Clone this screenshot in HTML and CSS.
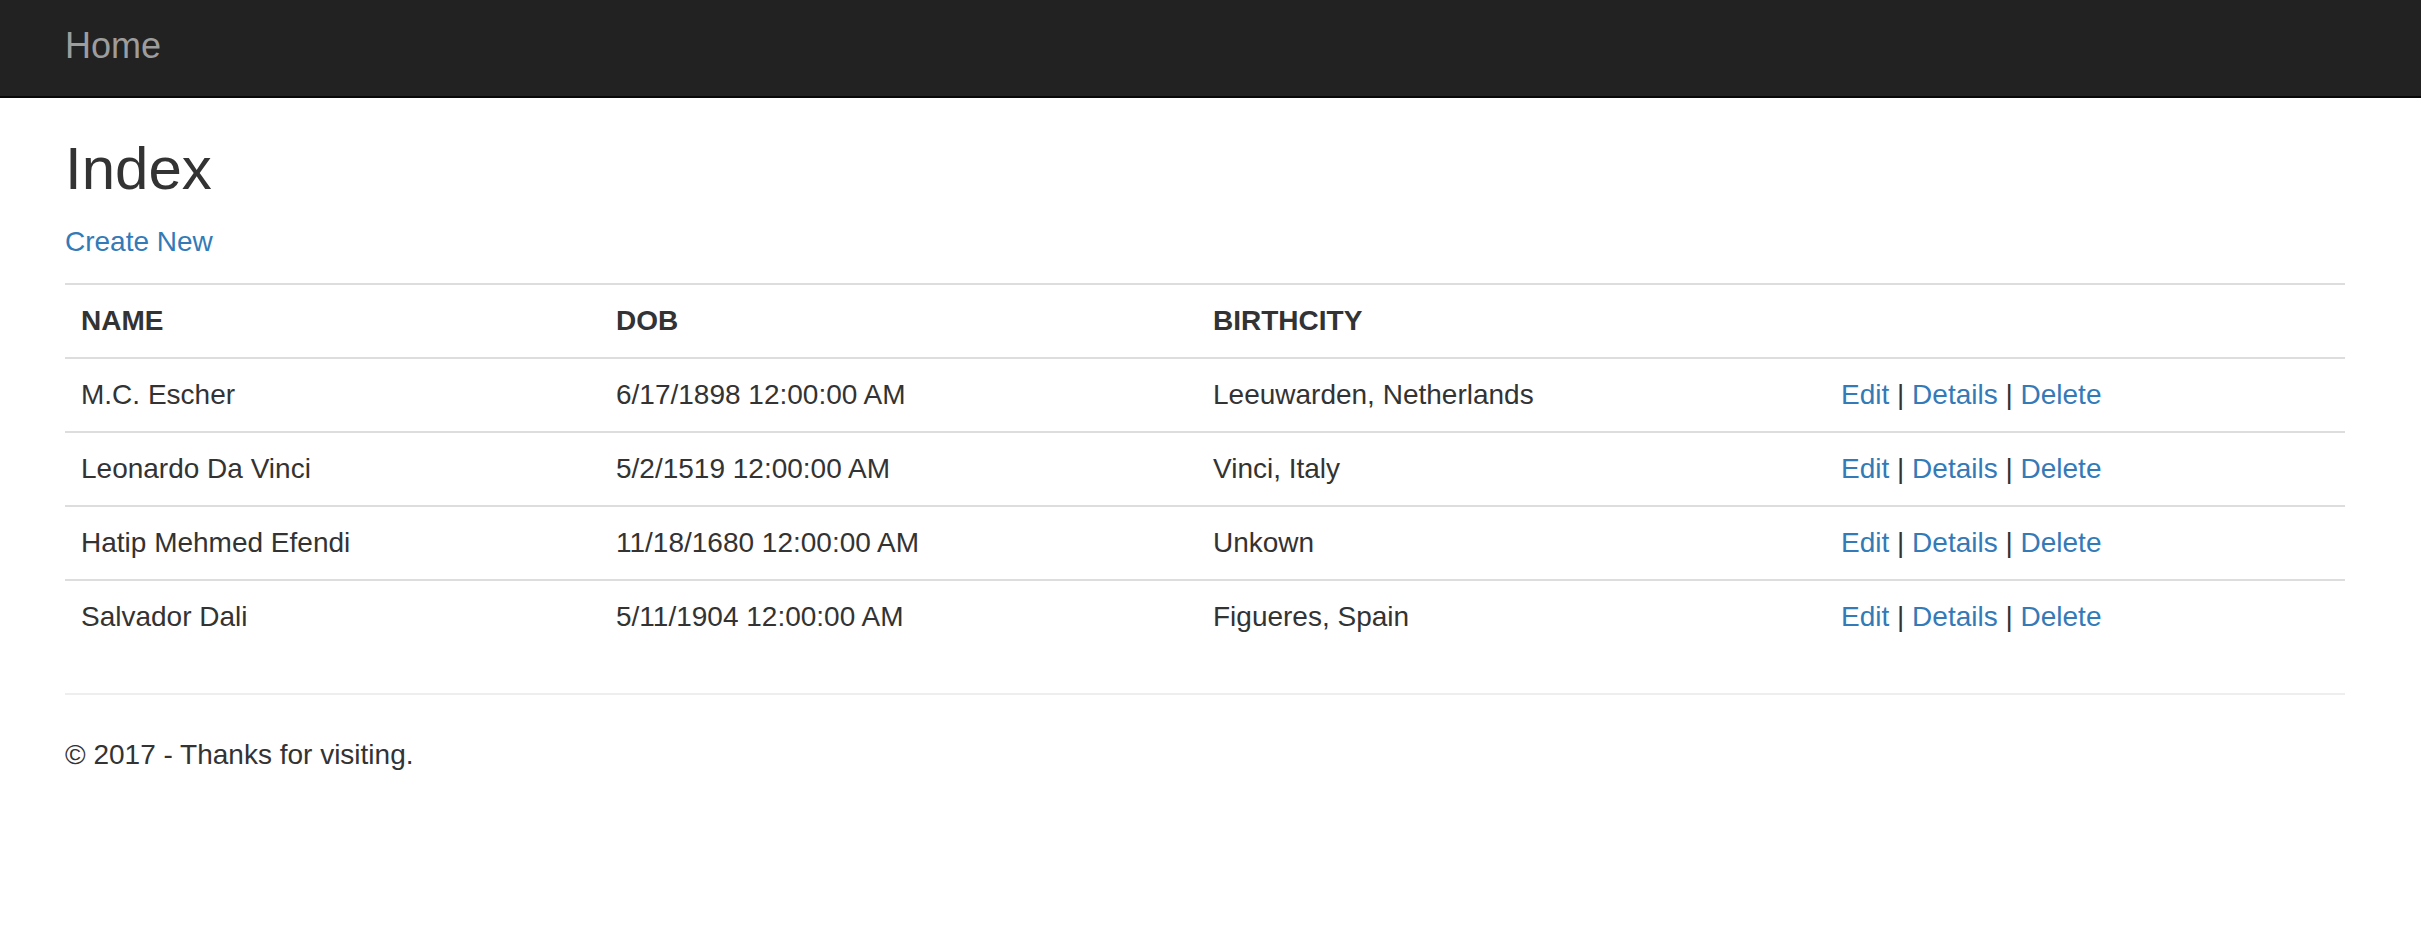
FILE: index.html
```html
<!DOCTYPE html>
<html>
<head>
<meta charset="utf-8">
<title>Index</title>
<link rel="stylesheet" href="styles.css">
</head>
<body>
<nav class="navbar">
  <div class="container">
    <a class="brand" href="#">Home</a>
  </div>
</nav>
<main class="container body-content">
  <h2 class="title">Index</h2>
  <p class="actions"><a href="#">Create New</a></p>
  <table class="table">
    <colgroup>
      <col class="c-name">
      <col class="c-dob">
      <col class="c-city">
      <col class="c-links">
    </colgroup>
    <tr>
      <th>NAME</th>
      <th>DOB</th>
      <th>BIRTHCITY</th>
      <th></th>
    </tr>
    <tr>
      <td>M.C. Escher</td>
      <td>6/17/1898 12:00:00 AM</td>
      <td>Leeuwarden, Netherlands</td>
      <td><a href="#">Edit</a> | <a href="#">Details</a> | <a href="#">Delete</a></td>
    </tr>
    <tr>
      <td>Leonardo Da Vinci</td>
      <td>5/2/1519 12:00:00 AM</td>
      <td>Vinci, Italy</td>
      <td><a href="#">Edit</a> | <a href="#">Details</a> | <a href="#">Delete</a></td>
    </tr>
    <tr>
      <td>Hatip Mehmed Efendi</td>
      <td>11/18/1680 12:00:00 AM</td>
      <td>Unkown</td>
      <td><a href="#">Edit</a> | <a href="#">Details</a> | <a href="#">Delete</a></td>
    </tr>
    <tr>
      <td>Salvador Dali</td>
      <td>5/11/1904 12:00:00 AM</td>
      <td>Figueres, Spain</td>
      <td><a href="#">Edit</a> | <a href="#">Details</a> | <a href="#">Delete</a></td>
    </tr>
  </table>
  <hr class="rule">
  <footer class="footer">
    <p>&copy; 2017 - Thanks for visiting.</p>
  </footer>
</main>
</body>
</html>
```

FILE: styles.css
```css
* {
  box-sizing: border-box;
}

html, body {
  margin: 0;
  padding: 0;
  background: #fff;
}

body {
  font-family: "Liberation Sans", Arial, Helvetica, sans-serif;
  font-size: 28px;
  line-height: 40px;
  color: #333;
}

a {
  color: #337ab7;
  text-decoration: none;
}

.container {
  width: 2280px;
  margin-left: 65px;
}

.navbar {
  background: #222;
  border-bottom: 2px solid #080808;
  height: 98px;
}

.brand {
  display: block;
  width: max-content;
  padding-top: 26px;
  font-size: 36px;
  line-height: 40px;
  color: #9d9d9d;
}

.title {
  margin: 38px 0 20px;
  font-size: 60px;
  line-height: 66px;
  font-weight: 500;
  color: #333;
}

.actions {
  margin: 0 0 21px;
}

.table {
  width: 2280px;
  border-collapse: collapse;
  border-spacing: 0;
  margin-bottom: 40px;
}

.c-name { width: 535px; }
.c-dob { width: 597px; }
.c-city { width: 628px; }
.c-links { width: 520px; }

.table th,
.table td {
  padding: 16px;
  line-height: 40px;
  text-align: left;
  vertical-align: top;
  border-top: 2px solid #ddd;
}

.table th {
  font-weight: bold;
}

.rule {
  margin: 0 0 40px;
  height: 0;
  border: 0;
  border-top: 2px solid #eee;
}

.footer p {
  margin: 0 0 20px;
}
```
